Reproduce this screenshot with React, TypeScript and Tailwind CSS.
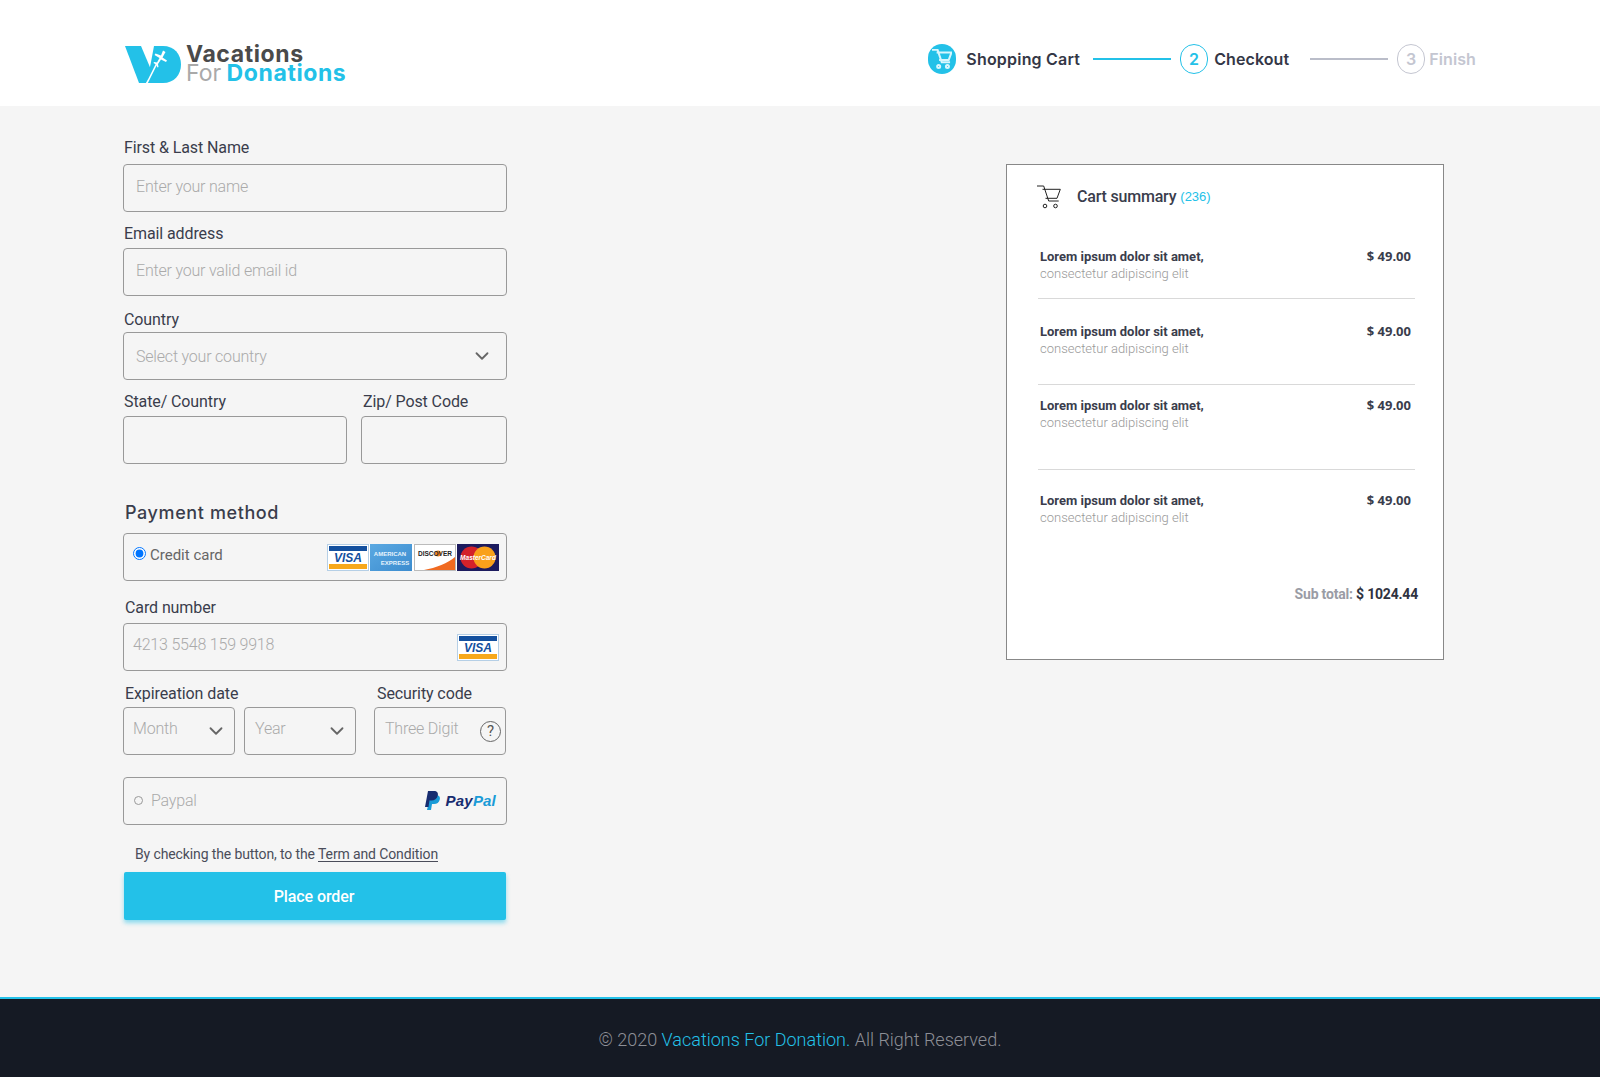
import React from 'react';
import { ChevronDown } from 'lucide-react';

const CartIcon = ({ size, color, strokeWidth }: { size: number; color: string; strokeWidth: number }) => (
    <svg width={size} height={size} viewBox="0 0 24 24" fill="none" stroke={color} strokeWidth={strokeWidth}>
        <path d="M0 1H6.700L11.700 16H21.700" />
        <path d="M5.500 4.300H23.300L20 13.300H8.500" />
        <circle cx="8" cy="21" r="1.800" />
        <circle cx="18.500" cy="21" r="1.800" />
    </svg>
);

const Logo = () => (
    <div className="mt-[10px] flex items-center gap-[5px]">
        <svg width="56" height="37" viewBox="0 0 56 37">
            <path d="M0 0H16L27 26L21 37H14Z" fill="#23c1e8" />
            <path d="M29 0H38C49 0 56 8 56 18.500C56 29 49 37 38 37H22Z" fill="#23c1e8" />
            <path d="M22 37L32 17" stroke="#fff" strokeWidth="1.600" />
            <path d="M38 4.500L40.500 6L37.500 11.500L42 14.500L41 16L36 13.500L33 18L33.500 21L32.500 21.500L31 18.500L28.500 17L29 16L32 16.500L34.500 12L29.500 9L30.500 7.500L36 9.500Z" fill="#fff" />
        </svg>
        <div className="font-['Inter',sans-serif] text-[23px] font-bold leading-[19px] tracking-[0.6px]">
            <div className="text-[#4a4a4a]">Vacations</div>
            <div>
                <span className="font-normal tracking-[0px] text-[#a9a9a9]">For </span>
                <span className="-ml-[1px] text-[#23c1e8]">Donations</span>
            </div>
        </div>
    </div>
);

const Stepper = () => (
    <div className="flex items-center font-['Inter',sans-serif] text-[16px] font-semibold tracking-[0.1px]">
        <div className="flex h-[30px] w-[28px] items-center justify-center rounded-full bg-[#23c1e8]">
            <CartIcon size={20} color="#d8f6fd" strokeWidth={2.400} />
        </div>
        <span className="ml-[10px] tracking-[0.2px] text-[#343746]">Shopping Cart</span>
        <div className="ml-[13px] h-[2px] w-[78px] bg-[#23c1e8]" />
        <div className="ml-[9px] flex h-[30px] w-[28px] items-center justify-center rounded-full border border-[#23c1e8] text-[#23c1e8]">2</div>
        <span className="ml-[6px] text-[#343746]">Checkout</span>
        <div className="ml-[21px] h-[2px] w-[78px] bg-[#babdc9]" />
        <div className="ml-[9px] flex h-[30px] w-[28px] items-center justify-center rounded-full border border-[#c4c6d1] text-[#c4c6d1]">3</div>
        <span className="ml-[4px] text-[#c4c6d1]">Finish</span>
    </div>
);

const Label = ({ children, className }: { children: React.ReactNode; className: string }) => (
    <label className={`block h-[24px] text-[16px] leading-[24px] tracking-[-0.1px] text-[#3a3d4c] ${className}`}>{children}</label>
);

const boxClass = 'h-[48px] rounded-[4px] border border-[#999] bg-[#f5f5f5]';
const fieldText = 'text-[16px] font-light tracking-[-0.2px] text-[#aaa]';
const inputClass = `${boxClass} w-full px-[12px] pb-[3px] text-[16px] font-light tracking-[-0.2px] text-[#333] outline-none placeholder:text-[#aaa]`;

const SelectBox = ({ text, className, textClass }: { text: string; className: string; textClass: string }) => (
    <div className={`${boxClass} ${fieldText} flex items-center justify-between ${className}`}>
        <span className={textClass}>{text}</span>
        <ChevronDown size={22} color="#666" strokeWidth={2} />
    </div>
);

const VisaCard = () => (
    <svg width="42" height="27" viewBox="0 0 42 27" className="bg-white">
        <rect x="0.500" y="0.500" width="41" height="26" fill="#fff" stroke="#b5cfe6" />
        <rect x="2" y="2" width="38" height="5" fill="#14509f" />
        <rect x="2" y="20" width="38" height="5" fill="#f7a81b" />
        <text x="21" y="18" textAnchor="middle" fontFamily="Liberation Sans" fontStyle="italic" fontWeight="700" fontSize="12" fill="#14509f">VISA</text>
    </svg>
);

const AmexCard = () => (
    <svg width="42" height="27" viewBox="0 0 42 27">
        <defs>
            <linearGradient id="amex" x1="0" y1="0" x2="1" y2="1">
                <stop offset="0" stopColor="#5ba9e2" />
                <stop offset="1" stopColor="#3c8ccf" />
            </linearGradient>
        </defs>
        <rect width="42" height="27" fill="url(#amex)" />
        <text x="20" y="12" textAnchor="middle" fontFamily="Liberation Sans" fontWeight="700" fontSize="6" fill="#e6f3fc">AMERICAN</text>
        <text x="25" y="21" textAnchor="middle" fontFamily="Liberation Sans" fontWeight="700" fontSize="6" fill="#e6f3fc">EXPRESS</text>
    </svg>
);

const DiscoverCard = () => (
    <svg width="42" height="27" viewBox="0 0 42 27">
        <rect x="0.500" y="0.500" width="41" height="26" fill="#fff" stroke="#bbb" />
        <path d="M10 26C22 24 34 19 41 13V26Z" fill="#f06a21" />
        <circle cx="24" cy="9.500" r="3" fill="#f58220" />
        <text x="21" y="12" textAnchor="middle" fontFamily="Liberation Sans" fontWeight="700" fontSize="6.500" fill="#222">DISCOVER</text>
    </svg>
);

const MasterCard = () => (
    <svg width="42" height="27" viewBox="0 0 42 27">
        <rect width="42" height="27" fill="#1c1b5e" />
        <circle cx="14.500" cy="13.500" r="11" fill="#d3222a" />
        <circle cx="27.500" cy="13.500" r="11" fill="#f9a11b" />
        <text x="21" y="16" textAnchor="middle" fontFamily="Liberation Sans" fontStyle="italic" fontWeight="700" fontSize="6.500" fill="#fff">MasterCard</text>
    </svg>
);

const PaypalLogo = () => (
    <div className="flex items-center gap-[5px]">
        <svg width="17" height="20" viewBox="0 0 16 20">
            <path d="M6 4H11C14.500 4 16 6 15.300 8.500C14.500 11.500 12.500 13 9.500 13H7.500L6.500 19H2.500Z" fill="#1a9bd7" />
            <path d="M3.500 0H9.500C12.500 0 14 1.800 13.300 4.500C12.500 8 10 9.500 7 9.500H5L4 16H0.500Z" fill="#172c70" />
        </svg>
        <span className="font-['Liberation_Sans',sans-serif] text-[15px] font-bold tracking-[0.2px] italic">
            <span className="text-[#172c70]">Pay</span>
            <span className="text-[#1a9bd7]">Pal</span>
        </span>
    </div>
);

const CheckoutForm = () => (
    <div className="w-[384px] shrink-0">
        <Label className="mt-[1px] mb-[4px] ml-[1px]">First &amp; Last Name</Label>
        <input className={inputClass} placeholder="Enter your name" />
        <Label className="mt-[10px] mb-[2px] ml-[1px]">Email address</Label>
        <input className={inputClass} placeholder="Enter your valid email id" />
        <Label className="mt-[12px] ml-[1px]">Country</Label>
        <SelectBox text="Select your country" textClass="mt-[1px]" className="pr-[13px] pl-[12px]" />
        <div className="mt-[10px] flex gap-[14px]">
            <div className="w-[224px]">
                <Label className="mb-[2px] ml-[1px]">State/ Country</Label>
                <input className={inputClass} />
            </div>
            <div className="w-[146px]">
                <Label className="mb-[2px] ml-[2px]">Zip/ Post Code</Label>
                <input className={inputClass} />
            </div>
        </div>

        <h2 className="mt-[37px] -mb-[1px] ml-[2px] font-['Inter',sans-serif] text-[18px] leading-[24px] font-medium tracking-[0.6px] text-[#3a3d4c]">Payment method</h2>
        <div className={`${boxClass} mt-[9px] flex items-center pr-[7px] pl-[9px]`}>
            <input type="radio" defaultChecked className="-mt-[7px] h-[13px] w-[13px]" />
            <span className="-mt-[3px] ml-[4px] text-[15px] text-[#666]">Credit card</span>
            <div className="ml-auto flex gap-[1.500px] bg-white">
                <VisaCard />
                <AmexCard />
                <DiscoverCard />
                <MasterCard />
            </div>
        </div>
        <Label className="mt-[15px] mb-[3px] ml-[2px]">Card number</Label>
        <div className={`${boxClass} flex items-center justify-between pr-[7px] pl-[9px]`}>
            <span className={`-mt-[4px] ${fieldText}`}>4213 5548 159 9918</span>
            <VisaCard />
        </div>
        <div className="mt-[11px] flex">
            <div className="w-[251px]">
                <Label className="mb-[1px] ml-[2px]">Expireation date</Label>
                <div className="flex gap-[9px]">
                    <SelectBox text="Month" textClass="-mt-[4px]" className="w-[112px] pr-[7px] pl-[9px]" />
                    <SelectBox text="Year" textClass="-mt-[4px]" className="w-[112px] pr-[7px] pl-[10px]" />
                </div>
            </div>
            <div>
                <Label className="mb-[1px] ml-[3px]">Security code</Label>
                <div className={`${boxClass} ${fieldText} flex w-[132px] items-center justify-between pr-[4px] pl-[10px]`}>
                    <span className="-mt-[4px]">Three Digit</span>
                    <span className="flex h-[21px] w-[21px] items-center justify-center rounded-full border border-[#666] text-[15px] font-normal text-[#555]">?</span>
                </div>
            </div>
        </div>
        <div className={`${boxClass} ${fieldText} mt-[22px] flex items-center justify-between pr-[10px] pl-[10px]`}>
            <div className="flex items-center gap-[8px]">
                <span className="-mt-[2px] h-[9px] w-[9px] rounded-full border border-[#999]" />
                <span>Paypal</span>
            </div>
            <PaypalLogo />
        </div>
        <p className="mt-[19px] ml-[12px] text-[14px] leading-[20px] tracking-[-0.12px] text-[#4a4d5a]">
            By checking the button, to the <span className="underline underline-offset-2">Term and Condition</span>
        </p>
        <button className="mt-[8px] ml-[1px] h-[48px] w-[382px] rounded-[2px] bg-[#23c1e8] pt-[1px] pr-[2px] text-[16px] font-medium tracking-[-0.1px] text-white shadow-[0_3px_4px_rgba(35,193,232,0.5)]">
            Place order
        </button>
    </div>
);

const rows = [
    { id: 1, className: 'pt-[24px] pb-[16px] border-b border-[#d9d9d9]' },
    { id: 2, className: 'pt-[24px] pb-[27px] border-b border-[#d9d9d9]' },
    { id: 3, className: 'pt-[12px] pb-[38px] border-b border-[#d9d9d9]' },
    { id: 4, className: 'pt-[22px] pb-[0px]' },
];

const CartSummary = () => (
    <div className="mt-[29px] h-[496px] w-[438px] shrink-0 border border-[#888] bg-white pt-[20px] pr-[28px] pl-[31px]">
        <div className="flex items-center">
            <div className="-ml-[1px]">
                <CartIcon size={24} color="#222" strokeWidth={1} />
            </div>
            <span className="ml-[16px] text-[16px] leading-[20px] font-medium tracking-[-0.2px] text-[#3a3d4c]">Cart summary</span>
            <span className="ml-[4px] font-['Liberation_Sans',sans-serif] text-[13px] text-[#23c1e8]">(236)</span>
        </div>
        <div className="mt-[15px]">
            {rows.map((row) => (
                <div key={row.id} className={`flex justify-between pr-[4px] pl-[2px] ${row.className}`}>
                    <div>
                        <div className="text-[13px] leading-[17px] font-bold text-[#3a3d4c]">Lorem ipsum dolor sit amet,</div>
                        <div className="text-[13px] leading-[17px] font-light text-[#999]">consectetur adipiscing elit</div>
                    </div>
                    <div className="font-['Noto_Sans',sans-serif] text-[13px] leading-[17px] font-bold text-[#3a3d4c]">$ 49.00</div>
                </div>
            ))}
        </div>
        <div className="mt-[58px] -mr-[3px] text-right text-[14px] leading-[20px] font-bold tracking-[-0.2px]">
            <span className="text-[#9a9ca5]">Sub total: </span>
            <span className="text-[#2f3240]">$ 1024.44</span>
        </div>
    </div>
);

export default function App() {
    return (
        <div className="flex min-h-[1077px] flex-col bg-[#f5f5f5] font-['Roboto',sans-serif]">
            <header className="flex h-[106px] items-center justify-between bg-white pt-[12px] pr-[124px] pl-[125px]">
                <Logo />
                <Stepper />
            </header>
            <main className="flex h-[891px] gap-[499px] pt-[29px] pl-[123px]">
                <CheckoutForm />
                <CartSummary />
            </main>
            <footer className="flex h-[80px] items-center justify-center border-t-2 border-[#23c1e8] bg-[#151a24] pt-[2px] text-[18px] font-light text-[#8d8f96]">
                <span>© 2020&nbsp;</span>
                <span className="text-[#23c1e8]">Vacations For Donation.</span>
                <span>&nbsp;All Right Reserved.</span>
            </footer>
        </div>
    );
}
